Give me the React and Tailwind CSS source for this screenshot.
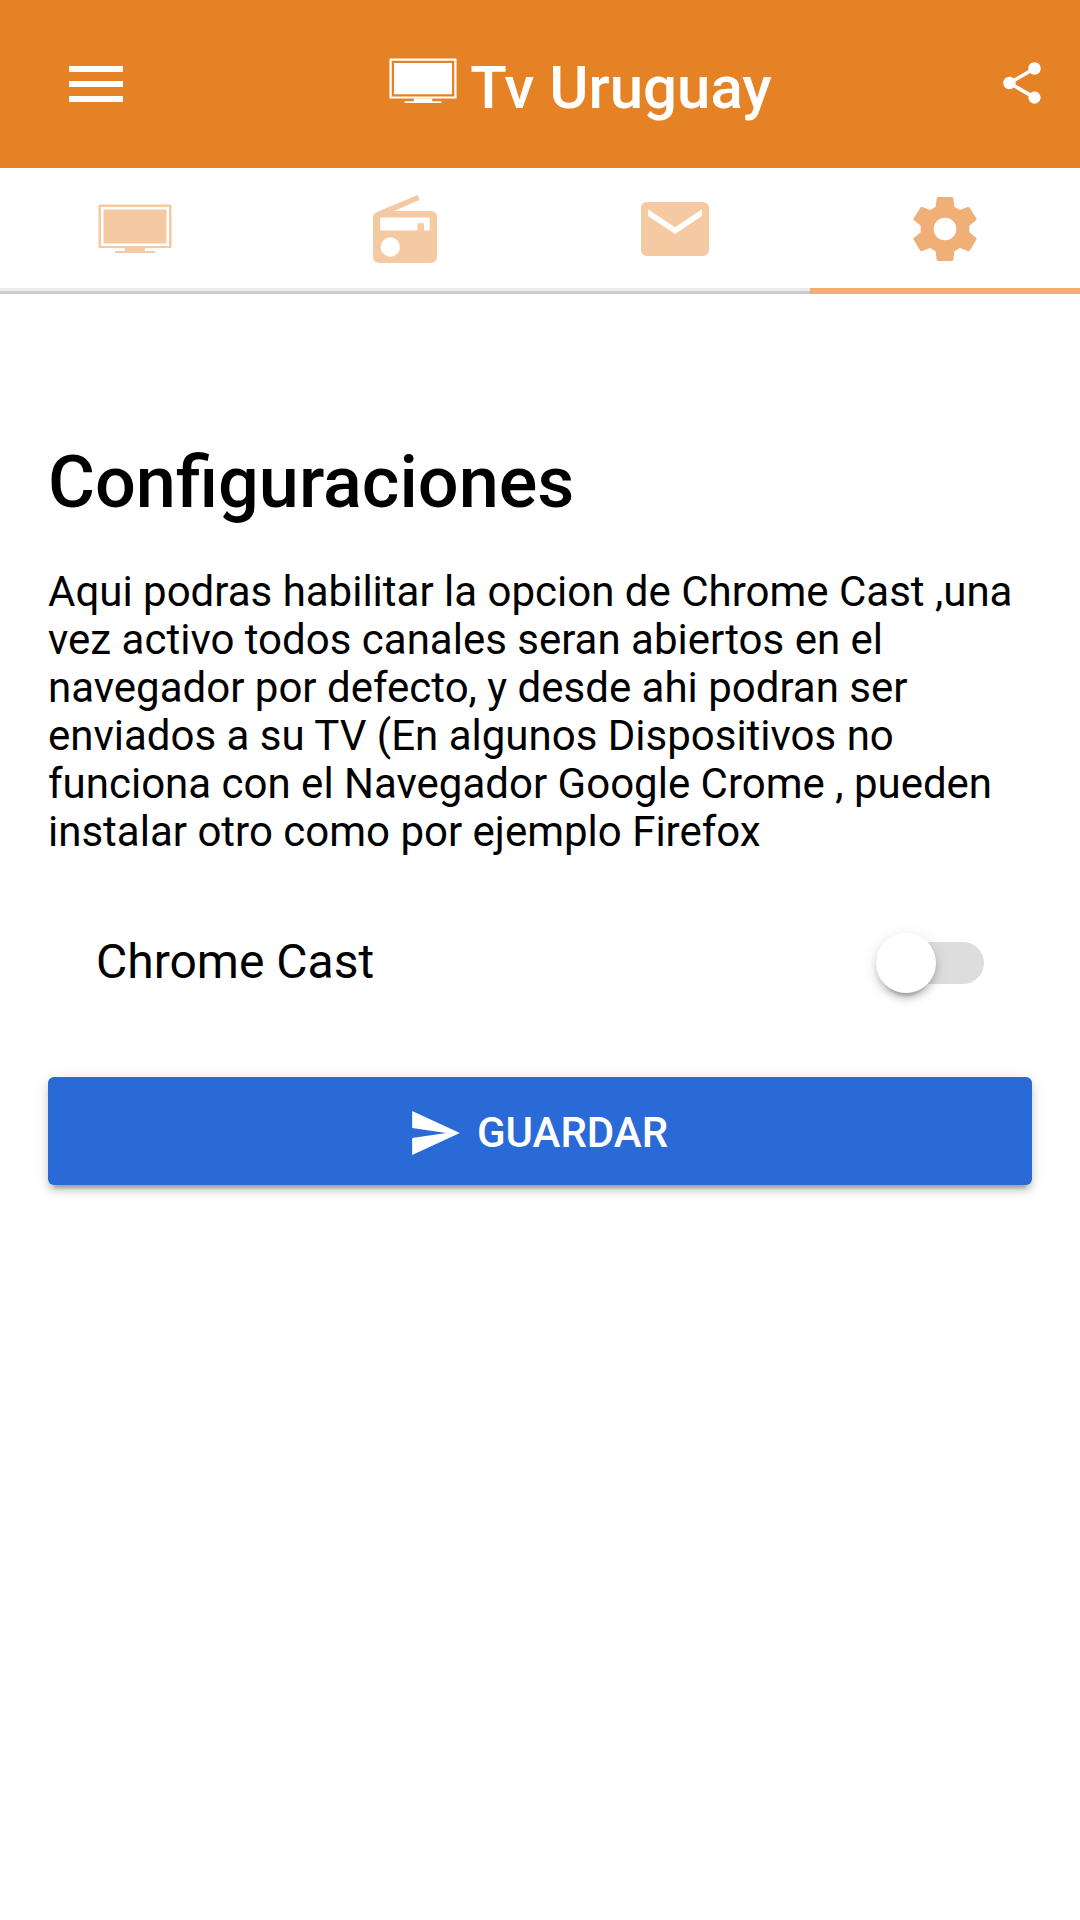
import { useState } from 'react'
import { MdMenu, MdShare } from 'react-icons/md'

const TvIcon = ({ className }) => (
  <svg viewBox="0 0 74 50" fill="currentColor" className={className} aria-hidden="true">
    <path fillRule="evenodd" d="M1.500 .5H72.500Q73.500 .5 73.500 1.500V44H.5V1.500Q.5 .5 1.500 .5ZM3 3V42H71V3Z" />
    <path d="M5.500 5.500H68.500V39.500H5.500Z" />
    <path d="M27 44H47V47H57V49H17V47H27Z" />
  </svg>
)

const RadioIcon = ({ className }) => (
  <svg viewBox="0 0 64 68" fill="currentColor" className={className} aria-hidden="true">
    <path
      fillRule="evenodd"
      d="M44.500 0L46.500 5L21 16H57.500Q64 16 64 22.500V61.500Q64 68 57.500 68H6.500Q0 68 0 61.500V22.500Q0 18.500 4.500 16.800ZM7.200 22.500V35.500H44.500V28.200H51V35.500H56.700V22.500ZM17.300 42.300A9.700 9.700 0 1 0 17.300 61.700A9.700 9.700 0 1 0 17.300 42.300Z"
    />
  </svg>
)

const MailIcon = ({ className }) => (
  <svg viewBox="0 0 68 54" fill="currentColor" className={className} aria-hidden="true">
    <path
      fillRule="evenodd"
      d="M6.500 0H61.500Q68 0 68 6.500V47.500Q68 54 61.500 54H6.500Q0 54 0 47.500V6.500Q0 0 6.500 0ZM7 7.200V14L34 32L61 14V7.200L34 25.200Z"
    />
  </svg>
)

const GearIcon = ({ className }) => (
  <svg viewBox="0 0 192 192" fill="currentColor" className={className} aria-hidden="true">
    <path
      fillRule="evenodd"
      d="M76 0H116Q120 0 121 4L124 29L141 39L164 30Q168 29 170 32L190 64Q192 67 189 70L169 86V106L189 122Q192 125 190 128L170 161Q168 164 164 162L141 153L124 163L121 188Q120 192 116 192H76Q72 192 71 188L68 163L51 153L28 162Q24 164 22 161L2 128Q0 125 3 122L23 106V86L3 70Q0 67 2 64L22 32Q24 29 28 30L51 39L68 29L71 4Q72 0 76 0ZM96 62A34 34 0 1 0 96 130A34 34 0 1 0 96 62Z"
    />
  </svg>
)

const SendIcon = ({ className }) => (
  <svg viewBox="48 64 416 384" fill="currentColor" className={className} aria-hidden="true">
    <path d="M48 448l416-192L48 64v149.333L346 256 48 298.667z" />
  </svg>
)

const TABS = [
  { id: 'tv', label: 'TV', Icon: TvIcon, size: 'w-[74px] h-[50px]' },
  { id: 'radio', label: 'Radio', Icon: RadioIcon, size: 'w-16 h-[68px]' },
  { id: 'contacto', label: 'Contacto', Icon: MailIcon, size: 'w-[68px] h-[54px]' },
  { id: 'config', label: 'Configuraciones', Icon: GearIcon, size: 'w-16 h-16' },
]

export default function App() {
  const [tab, setTab] = useState('config')
  const [cast, setCast] = useState(false)

  return (
    <div className="min-h-screen bg-white text-black font-['Roboto',sans-serif]">
      {/* Header */}
      <header className="flex items-center h-[168px] bg-[#e58225] text-white">
        <button type="button" aria-label="Menu" className="pl-[60px] pr-12">
          <MdMenu className="size-[72px]" />
        </button>
        <h1 className="flex-1 flex items-center justify-center gap-[13px] pt-2 text-[60px] leading-[72px] font-medium">
          <TvIcon className="w-[68px] h-[46px] mb-[14px]" />
          Tv Uruguay
        </h1>
        <button type="button" aria-label="Compartir" className="pl-4 pr-[33px] pb-[2px]">
          <MdShare className="size-[50px]" />
        </button>
      </header>

      {/* Tabs */}
      <nav className="grid grid-cols-4 h-[126px]">
        {TABS.map(({ id, label, Icon, size }) => (
          <button
            key={id}
            type="button"
            aria-label={label}
            onClick={() => setTab(id)}
            className="flex flex-col"
          >
            <span
              className={`flex-1 w-full flex items-center justify-center pt-[2px] ${tab === id ? 'text-[#efaf77]' : 'text-[#f5c9a1]'}`}
            >
              <Icon className={size} />
            </span>
            <span
              className={`w-full h-[6px] ${tab === id ? 'bg-[#efaf77]' : 'bg-[#ebebeb] border-b-3 border-[#cccccc]'}`}
            />
          </button>
        ))}
      </nav>

      {/* Settings */}
      <main className="px-12 pt-[146px]">
        <h2 className="text-[72px] leading-[86px] font-medium">Configuraciones</h2>
        <p className="mt-[42px] text-[42px] leading-[48px]">
          Aqui podras habilitar la opcion de Chrome Cast ,una vez activo todos canales seran abiertos en el
          navegador por defecto, y desde ahi podran ser enviados a su TV (En algunos Dispositivos no funciona
          con el Navegador Google Crome , pueden instalar otro como por ejemplo Firefox
        </p>

        <form onSubmit={(e) => e.preventDefault()}>
          <div className="flex items-center justify-between h-[132px] mt-[41px] px-12">
            <label htmlFor="cast" className="pb-[2px] text-[48px] leading-[58px]">
              Chrome Cast
            </label>
            <input
              id="cast"
              type="checkbox"
              role="switch"
              checked={cast}
              onChange={(e) => setCast(e.target.checked)}
              className="appearance-none flex items-center w-[108px] h-[42px] rounded-full bg-[#dddddd] checked:bg-[#efaf77] before:size-[60px] before:shrink-0 before:rounded-full before:bg-white before:shadow-[0_6px_6px_rgba(0,0,0,0.14),0_9px_3px_-6px_rgba(0,0,0,0.2),0_3px_15px_rgba(0,0,0,0.12)] checked:before:ml-12"
            />
          </div>
          <button
            type="submit"
            className="flex items-center justify-center gap-[17px] w-full h-[108px] mt-12 pt-[3px] rounded-md bg-[#2a6ad7] text-white text-[42px] leading-[48px] font-medium uppercase shadow-[0_6px_6px_rgba(0,0,0,0.14),0_9px_3px_-6px_rgba(0,0,0,0.2),0_3px_15px_rgba(0,0,0,0.12)]"
          >
            <SendIcon className="w-12 h-11" />
            Guardar
          </button>
        </form>
      </main>
    </div>
  )
}
